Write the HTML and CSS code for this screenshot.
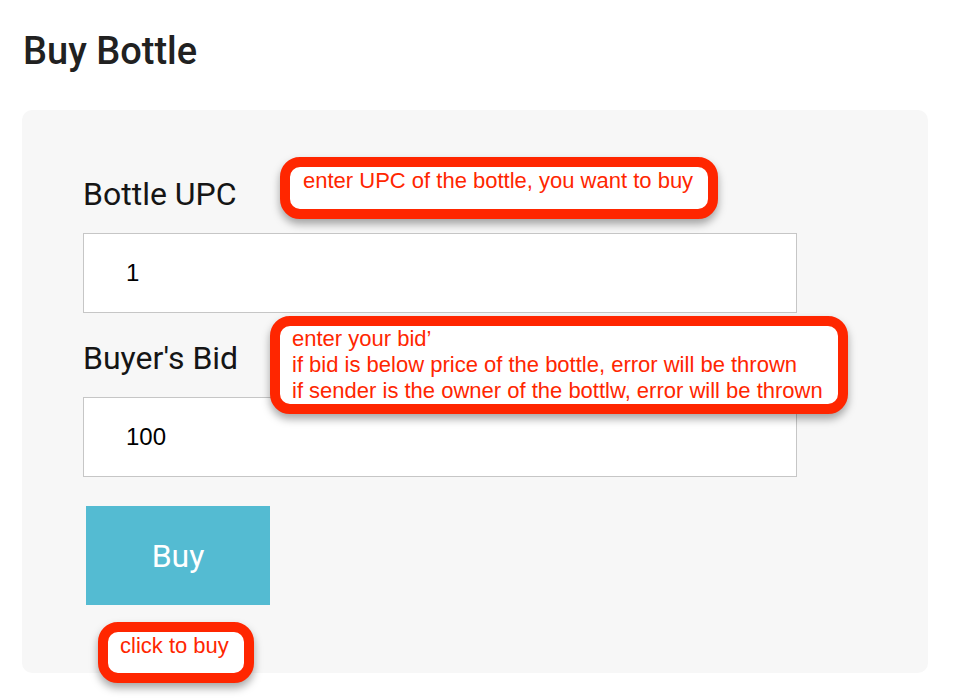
FILE: index.html
```html
<!DOCTYPE html>
<html lang="en">
<head>
<meta charset="utf-8">
<title>Buy Bottle</title>
<link rel="stylesheet" href="styles.css">
</head>
<body>
<div class="page">
  <h1 class="title">Buy Bottle</h1>
  <section class="card">
    <label class="field-label" for="upc">Bottle UPC</label>
    <input class="field-input" id="upc" type="text" value="1">
    <label class="field-label field-label--second" for="bid">Buyer's Bid</label>
    <input class="field-input" id="bid" type="text" value="100">
    <button class="buy-btn" type="button">Buy</button>
  </section>

  <div class="note note--upc">enter UPC of the bottle, you want to buy</div>
  <div class="note note--bid">enter your bid’<br>if bid is below price of the bottle, error will be thrown<br>if sender is the owner of the bottlw, error will be thrown</div>
  <div class="note note--buy">click to buy</div>
</div>
</body>
</html>
```

FILE: styles.css
```css
* { box-sizing: border-box; }

html, body {
  margin: 0;
  padding: 0;
  background: #ffffff;
}

.page {
  position: relative;
  width: 972px;
  height: 700px;
  overflow: hidden;
  padding: 29px 0 0 22px;
  font-family: Roboto, "Liberation Sans", sans-serif;
}

.title {
  margin: 0 0 36px 1px;
  font-family: Roboto, sans-serif;
  font-weight: 500;
  font-size: 38px;
  line-height: 45px;
  color: #212121;
}

.card {
  width: 906px;
  height: 563px;
  background: #f7f7f7;
  border-radius: 10px;
  padding: 65px 0 0 61px;
  display: flex;
  flex-direction: column;
  align-items: flex-start;
}

.field-label {
  font-family: Roboto, sans-serif;
  font-size: 32px;
  line-height: 38px;
  color: #151515;
  margin-bottom: 20px;
}

.field-label--second {
  margin-top: 26px;
}

.field-input {
  width: 714px;
  height: 80px;
  border: 1px solid #c6c6c6;
  background: #ffffff;
  padding: 0 0 0 42px;
  margin: 0;
  font-family: "Liberation Sans", Arial, sans-serif;
  font-size: 24px;
  color: #000000;
  outline: none;
  border-radius: 0;
}

.buy-btn {
  margin: 29px 0 0 3px;
  width: 184px;
  height: 99px;
  border: none;
  border-radius: 0;
  background: #54bbd2;
  color: #ffffff;
  font-family: Roboto, sans-serif;
  font-size: 32px;
  padding: 0;
  cursor: pointer;
}

/* annotation bubbles laid over the form */
.note {
  position: absolute;
  background: #ffffff;
  border: 10px solid #ff2600;
  border-radius: 20px;
  box-shadow: 0 5px 8px rgba(0, 0, 0, 0.35);
  color: #ff2600;
  font-family: "Liberation Sans", Arial, sans-serif;
  font-size: 22px;
  line-height: 26px;
  white-space: nowrap;
}

.note--upc {
  left: 280px;
  top: 157px;
  width: 438px;
  height: 62px;
  padding: 1px 0 0 13px;
}

.note--bid {
  left: 270px;
  top: 316px;
  width: 578px;
  height: 98px;
  padding: 0 0 0 12px;
}

.note--buy {
  left: 98px;
  top: 622px;
  width: 156px;
  height: 61px;
  padding: 1px 0 0 12px;
}
```
